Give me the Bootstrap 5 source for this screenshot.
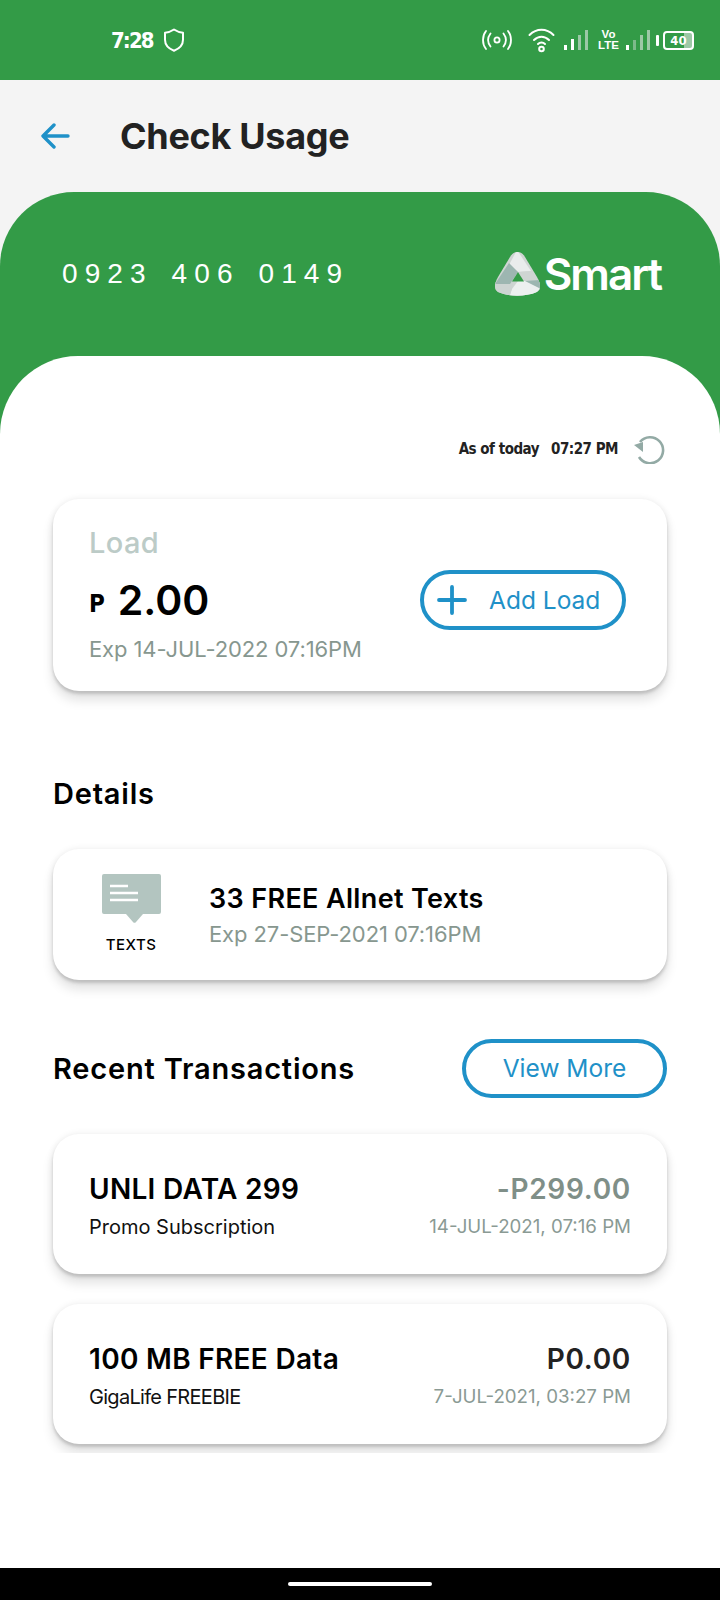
<!DOCTYPE html>
<html lang="en">
<head>
    <meta charset="UTF-8">
    <meta name="viewport" content="width=device-width, initial-scale=1.0">
    <title>Check Usage</title>
    <link rel="stylesheet" href="https://cdn.jsdelivr.net/npm/bootstrap@5.3.0/dist/css/bootstrap.min.css">
    <style>
        body { font-family: Inter, "Open Sans", sans-serif; background: #f4f4f4; color: #000; height: 1600px; }
        .status-strip { height: 80px; background: #339b47; color: #fff; padding: 0 26px 0 111px; }
        .status-clock { font-family: "DejaVu Sans Condensed", "DejaVu Sans", sans-serif; font-weight: 700; font-size: 22px; letter-spacing: -1.9px; margin-right: 10px; }
        .volte { font-family: "Liberation Sans", sans-serif; font-size: 11.5px; line-height: 11px; text-align: center; font-weight: 700; width: 21px; margin: 0 6px 0 9px; }
        .batt-box { width: 31px; height: 19px; border: 2px solid #fff; border-radius: 4px; font: 700 13px/15px "DejaVu Sans Condensed", sans-serif; text-align: center; background: linear-gradient(90deg, transparent 70%, #9cc8a6 70%); }
        .title-strip { height: 112px; padding-left: 41px; }
        .title-strip h1 { font-size: 36px; font-weight: 700; color: #222; letter-spacing: -.3px; margin: 2px 0 0 50px; }
        .green-panel { background: #339b47; border-radius: 74px 74px 0 0; }
        .sim-row { height: 164px; padding: 45px 59px 0 62px; }
        .sim-number { font-family: "Liberation Sans", sans-serif; font-size: 28px; letter-spacing: 7.100px; color: #fff; word-spacing: 4px; white-space: nowrap; }
        .logo-box { margin-top: 15px; }
        .smart-word { font-size: 44px; font-weight: 600; color: #fff; letter-spacing: -2px; line-height: 44px; margin-left: 4px; }
        .white-panel { background: #fff; border-radius: 78px 78px 0 0; padding: 81px 53px 0; }
        .asof-row { height: 24px; font-family: "DejaVu Sans Condensed", "DejaVu Sans", sans-serif; font-weight: 700; font-size: 15px; color: #222; letter-spacing: -.5px; }
        .soft-card { border: 0; border-radius: 26px; box-shadow: 0 9px 12px rgba(0,0,0,.12), 0 3px 3px rgba(0,0,0,.13), 0 0 7px rgba(0,0,0,.08); }
        .load-card { height: 192px; margin-top: 38px; padding: 0 41px 0 36px; }
        .load-label { font-size: 29px; line-height: 36px; font-weight: 500; letter-spacing: .4px; color: #bccbc7; margin-top: -2px; }
        .load-amount { font-size: 41px; line-height: 52px; font-weight: 600; margin-top: 13px; }
        .load-peso { font-family: "DejaVu Sans Condensed", sans-serif; font-size: 24px; font-weight: 700; margin-right: 13px; vertical-align: 3px; }
        .exp-line { font-size: 22px; line-height: 30px; color: #87978f; letter-spacing: -.1px; white-space: nowrap; }
        .load-exp { margin-top: 4px; }
        .pill-btn { border: 4px solid #1f91c8; border-radius: 40px; color: #1f91c8; background: #fff; font-size: 24.500px; height: 60px; padding: 0; }
        .add-btn { width: 206px; margin-top: 10px; justify-content: flex-start; padding-left: 13px; }
        .add-btn svg { margin-right: 22px; }
        .more-btn { width: 205px; height: 59px; }
        .block-title { font-size: 29px; font-weight: 600; line-height: 40px; margin: 0; letter-spacing: .8px; }
        .details-card { height: 131px; margin-top: 35px; padding-left: 48px; }
        .texts-col { width: 60px; margin-right: 48px; }
        .texts-label { font-size: 15px; font-weight: 500; letter-spacing: .5px; margin-top: 12px; line-height: 20px; }
        .allnet-title { font-size: 27px; font-weight: 600; line-height: 36px; letter-spacing: .35px; }
        .details-exp { margin-top: 2px; }
        .recent-row { height: 59px; margin-top: 59px; }
        .tx-clip { overflow: hidden; margin: 0 -53px; padding: 0 53px 9px; }
        .tx-card { height: 140px; margin-top: 36px; padding: 0 36px; }
        .tx-card + .tx-card { margin-top: 30px; }
        .tx-name { font-size: 28px; font-weight: 600; line-height: 38px; letter-spacing: .3px; margin-top: 1px; }
        .tx-sub { font-size: 20px; line-height: 26px; margin-top: 6px; color: #111; white-space: nowrap; }
        .tx-sub-tight { letter-spacing: -.7px; }
        .tx-amount { font-size: 28px; font-weight: 600; line-height: 38px; letter-spacing: .7px; color: #222; margin-top: 1px; }
        .tx-amount.is-spent { color: #7f8f88; }
        .tx-date { font-size: 18.700px; line-height: 26px; margin-top: 6px; color: #8a9a94; white-space: nowrap; }
        .nav-strip { height: 32px; background: #000; }
        .home-pill { width: 144px; height: 4px; background: #fff; border-radius: 2px; }
    </style>
</head>
<body class="d-flex flex-column">

    <!-- Status bar -->
    <div class="status-strip d-flex align-items-center">
        <span class="status-clock">7:28</span>
        <svg width="22" height="24" viewBox="0 0 22 24" fill="none" stroke="#fff" stroke-width="2" stroke-linejoin="round"><path d="M11 1.500c3 2 5.500 3 9 3.200v7c0 5-3.500 8.800-9 11-5.500-2.200-9-6-9-11v-7c3.500-.2 6-1.200 9-3.200z"/></svg>
        <div class="ms-auto d-flex align-items-center">
            <svg width="30" height="20" viewBox="0 0 30 20" fill="none" stroke="#fff" stroke-width="1.800" stroke-linecap="round"><circle cx="15" cy="10" r="2.600"/><path d="M8.500 3.500c-3 4-3 9 0 13M21.500 3.500c3 4 3 9 0 13M4 1c-4 5-4 13 0 18M26 1c4 5 4 13 0 18"/></svg>
            <svg class="ms-3" width="27" height="25" viewBox="0 0 27 25" fill="none" stroke="#fff" stroke-width="2" stroke-linecap="round"><path d="M1.500 7c7-7 17-7 24 0M6 12c4.500-4.500 10.500-4.500 15 0M10 16c2-2 5-2 7 0"/><circle cx="13.500" cy="21" r="2.300"/></svg>
            <svg class="ms-2" width="26" height="21" viewBox="0 0 26 21"><rect x="1" y="15" width="3" height="5" fill="#fff"/><rect x="8" y="9" width="3" height="11" fill="#fff"/><rect x="15" y="5" width="3" height="15" fill="#9cc8a6"/><rect x="22" y="0" width="3" height="20" fill="#9cc8a6"/></svg>
            <div class="volte">Vo<br>LTE</div>
            <svg width="27" height="21" viewBox="0 0 27 21"><rect x="1" y="15" width="3" height="5" fill="#fff"/><rect x="8" y="10" width="3" height="10" fill="#7dba8a"/><rect x="15" y="5" width="3" height="15" fill="#9cc8a6"/><rect x="22" y="0" width="3" height="20" fill="#9cc8a6"/></svg>
            <svg class="ms-1" width="3" height="11" viewBox="0 0 3 11"><rect width="3" height="11" rx="1" fill="#fff"/></svg>
            <div class="batt-box ms-1">40</div>
        </div>
    </div>

    <!-- Title -->
    <div class="title-strip d-flex align-items-center">
        <svg width="29" height="26" viewBox="0 0 29 26" fill="none" stroke="#1f91c8" stroke-width="3.400" stroke-linecap="round" stroke-linejoin="round"><path d="M27 13H3M13 2L2 13l11 11"/></svg>
        <h1>Check Usage</h1>
    </div>

    <!-- Green number panel -->
    <div class="green-panel flex-grow-1 d-flex flex-column">
        <div class="sim-row d-flex justify-content-between align-items-start">
            <div class="sim-number mt-3">0923 406 0149</div>
            <div class="logo-box d-flex align-items-center">
                <svg width="45" height="44" viewBox="0 0 45 44">
                    <clipPath id="logoclip"><path d="M22.500 0C26 0 28 2 30 5L42 25C46 32 46 37 42 40C30 45 14 45 3 40C-1 37-1 32 3 25L15 5C17 2 19 0 22.500 0z"/></clipPath>
                    <g clip-path="url(#logoclip)">
                        <rect width="45" height="44" fill="#cfd5d3"/>
                        <path d="M22 -2L14 13l9 7L36 19z" fill="#e9ecec"/>
                        <path d="M36 19L46 32 29 29 23 20z" fill="#cfd5d3"/>
                        <path d="M46 28v10L36 38 24 30l5-1z" fill="#9db6b1"/>
                        <path d="M23 29h7l16 8-12 9H14l3-9z" fill="#edf0f0"/>
                        <path d="M-2 30l19-1 1 4-4 13H-2z" fill="#cdd4d2"/>
                        <path d="M14 11l9 9-6 9-2 3H0z" fill="#9db6b1"/>
                    </g>
                    <path d="M23 20l6 9.500H17z" fill="#339b47"/>
                </svg>
                <span class="smart-word">Smart</span>
            </div>
        </div>

        <div class="white-panel flex-grow-1">
            <div class="asof-row d-flex justify-content-end align-items-center">
                <span>As of today</span>
                <span class="ms-2 ps-1">07:27 PM</span>
                <svg class="ms-3" width="33" height="30" viewBox="0 0 33 30" fill="none" stroke="#93aaa5" stroke-width="2.600"><path d="M6 8A13 13 0 1 1 5 23"/><path d="M0 11l9-3v10z" fill="#93aaa5" stroke="none"/></svg>
            </div>

            <!-- Load -->
            <div class="card soft-card load-card flex-row align-items-center justify-content-between">
                <div>
                    <div class="load-label">Load</div>
                    <div class="load-amount"><span class="load-peso">P</span>2.00</div>
                    <div class="exp-line load-exp">Exp 14-JUL-2022 07:16PM</div>
                </div>
                <button class="btn pill-btn add-btn d-flex align-items-center">
                    <svg width="30" height="30" viewBox="0 0 30 30" fill="none" stroke="#1f91c8" stroke-width="3.800" stroke-linecap="round"><path d="M15 2v26M2 15h26"/></svg>
                    <span>Add Load</span>
                </button>
            </div>

            <!-- Details -->
            <h2 class="block-title" style="margin-top: 83px">Details</h2>
            <div class="card soft-card details-card flex-row align-items-center">
                <div class="texts-col d-flex flex-column align-items-center">
                    <svg width="59" height="49" viewBox="0 0 59 49"><path d="M2 0h55a2 2 0 0 1 2 2v36a2 2 0 0 1-2 2H41l-7 8a2 2 0 0 1-3 0l-7-8H2a2 2 0 0 1-2-2V2a2 2 0 0 1 2-2z" fill="#b3c5c0"/><path d="M8 12h18M8 19h28M8 26h28" stroke="#fff" stroke-width="2.600"/></svg>
                    <div class="texts-label">TEXTS</div>
                </div>
                <div>
                    <div class="allnet-title">33 FREE Allnet Texts</div>
                    <div class="exp-line details-exp">Exp 27-SEP-2021 07:16PM</div>
                </div>
            </div>

            <!-- Recent transactions -->
            <div class="recent-row d-flex justify-content-between align-items-center">
                <h2 class="block-title">Recent Transactions</h2>
                <button class="btn pill-btn more-btn">View More</button>
            </div>

            <div class="tx-clip">
                <div class="card soft-card tx-card flex-row align-items-center justify-content-between">
                    <div>
                        <div class="tx-name">UNLI DATA 299</div>
                        <div class="tx-sub">Promo Subscription</div>
                    </div>
                    <div class="text-end">
                        <div class="tx-amount is-spent">-P299.00</div>
                        <div class="tx-date">14-JUL-2021, 07:16 PM</div>
                    </div>
                </div>
                <div class="card soft-card tx-card flex-row align-items-center justify-content-between">
                    <div>
                        <div class="tx-name">100 MB FREE Data</div>
                        <div class="tx-sub tx-sub-tight">GigaLife FREEBIE</div>
                    </div>
                    <div class="text-end">
                        <div class="tx-amount">P0.00</div>
                        <div class="tx-date">7-JUL-2021, 03:27 PM</div>
                    </div>
                </div>
            </div>
        </div>
    </div>

    <!-- Android nav bar -->
    <div class="nav-strip d-flex align-items-center justify-content-center"><div class="home-pill"></div></div>

    <script src="https://cdn.jsdelivr.net/npm/bootstrap@5.3.0/dist/js/bootstrap.bundle.min.js"></script>
</body>
</html>
